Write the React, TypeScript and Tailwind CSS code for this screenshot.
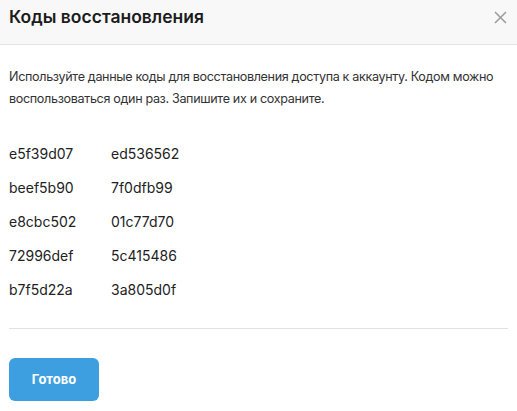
import { Fragment } from 'react';

const codes = [
  ['e5f39d07', 'ed536562'],
  ['beef5b90', '7f0dfb99'],
  ['e8cbc502', '01c77d70'],
  ['72996def', '5c415486'],
  ['b7f5d22a', '3a805d0f'],
];

export default function App() {
  return (
    <div className="w-[517px] h-[411px] bg-white text-[#222] overflow-hidden" style={{ fontFamily: 'Inter, "Noto Sans", sans-serif' }}>
      {/* шапка */}
      <div className="h-[45px] flex items-center justify-between pl-[9px] pr-[10px] pb-[10px] bg-[#f8f8f9] border-b border-[#e4e4e4]">
        <h1 className="text-[17.5px] font-semibold text-[#1c1c1c]">Коды восстановления</h1>
        <button className="w-[14px] h-[14px] flex items-center justify-center text-[#9a9a9a]">
          <svg width="13" height="13" viewBox="0 0 13 13" fill="none" stroke="currentColor" strokeWidth="1.5">
            <path d="M1 1L12 12M12 1L1 12" />
          </svg>
        </button>
      </div>

      <div className="px-[9px]">
        <p className="mt-[21px] text-[12.6px] leading-[22px] tracking-[-0.35px] text-[#333]">
          Используйте данные коды для восстановления доступа к аккаунту. Кодом можно воспользоваться один раз. Запишите их и сохраните.
        </p>

        <div className="mt-[26px] grid grid-cols-[102px_1fr] auto-rows-[34px] items-center text-[14px]">
          {codes.map(([a, b]) => (
            <Fragment key={a}>
              <span>{a}</span>
              <span>{b}</span>
            </Fragment>
          ))}
        </div>

        <div className="mt-[22px] border-t border-[#e2e2e2]" />

        <button className="mt-[29px] w-[90px] h-[43px] rounded-[6px] bg-[#3d9fe0] text-white text-[13px] font-bold">
          Готово
        </button>
      </div>
    </div>
  );
}
